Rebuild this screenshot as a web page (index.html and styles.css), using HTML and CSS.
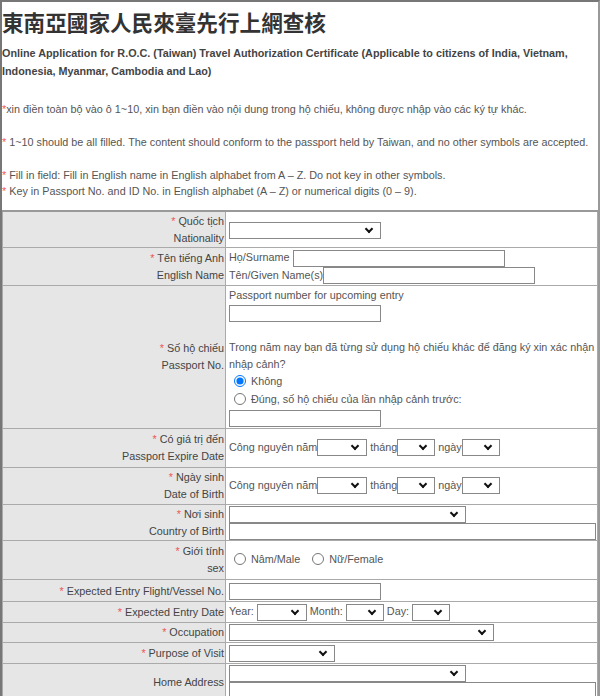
FILE: index.html
```html
<!DOCTYPE html>
<html lang="vi">
<head>
    <meta charset="UTF-8">
    <meta name="viewport" content="width=device-width, initial-scale=1.0">
    <title>東南亞國家人民來臺先行上網查核</title>
    <link rel="stylesheet" href="styles.css">
</head>
<body>
    <div class="page">
        <h1 class="title">東南亞國家人民來臺先行上網查核</h1>
        <p class="subtitle">Online Application for R.O.C. (Taiwan) Travel Authorization Certificate (Applicable to citizens of India, Vietnam, Indonesia, Myanmar, Cambodia and Lao)</p>

        <!-- Notes -->
        <div class="notes">
            <p class="note"><span class="req">*</span>xin điền toàn bộ vào ô 1~10, xin bạn điền vào nội dung trong hộ chiếu, không được nhập vào các ký tự khác.</p>
            <p class="note"><span class="req">*</span> 1~10 should be all filled. The content should conform to the passport held by Taiwan, and no other symbols are accepted.</p>
            <p class="note note-pair"><span class="req">*</span> Fill in field: Fill in English name in English alphabet from A – Z. Do not key in other symbols.<br>
            <span class="req">*</span> Key in Passport No. and ID No. in English alphabet (A – Z) or numerical digits (0 – 9).</p>
        </div>

        <!-- Application form -->
        <table class="form">
            <tr>
                <th><span class="req">*</span> Quốc tịch<br>Nationality</th>
                <td><span class="sel"><select class="sel-md"></select></span></td>
            </tr>
            <tr class="roomy">
                <th><span class="req">*</span> Tên tiếng Anh<br>English Name</th>
                <td class="stack">
                    <div>Họ/Surname <input type="text" class="in-name"></div>
                    <div>Tên/Given Name(s)<input type="text" class="in-name"></div>
                </td>
            </tr>
            <tr class="roomy">
                <th><span class="req">*</span> Số hộ chiếu<br>Passport No.</th>
                <td class="stack">
                    <div>Passport number for upcoming entry</div>
                    <div><input type="text" class="in-md"></div>
                    <div class="blank"></div>
                    <div>Trong năm nay bạn đã từng sử dụng hộ chiếu khác để đăng ký xin xác nhận nhập cảnh?</div>
                    <label class="radio"><input type="radio" name="prev" checked> Không</label>
                    <label class="radio"><input type="radio" name="prev"> Đúng, số hộ chiếu của lần nhập cảnh trước:</label>
                    <div><input type="text" class="in-md"></div>
                </td>
            </tr>
            <tr class="tall">
                <th><span class="req">*</span> Có giá trị đến<br>Passport Expire Date</th>
                <td>Công nguyên năm<span class="sel"><select class="sel-year"></select></span> tháng<span class="sel"><select class="sel-sm"></select></span> ngày<span class="sel"><select class="sel-sm"></select></span></td>
            </tr>
            <tr class="roomy">
                <th><span class="req">*</span> Ngày sinh<br>Date of Birth</th>
                <td>Công nguyên năm<span class="sel"><select class="sel-year"></select></span> tháng<span class="sel"><select class="sel-sm"></select></span> ngày<span class="sel"><select class="sel-sm"></select></span></td>
            </tr>
            <tr>
                <th><span class="req">*</span> Nơi sinh<br>Country of Birth</th>
                <td class="stack">
                    <span class="sel"><select class="sel-lg"></select></span>
                    <input type="text" class="in-full">
                </td>
            </tr>
            <tr class="tall">
                <th><span class="req">*</span> Giới tính<br>sex</th>
                <td>
                    <label class="radio inline"><input type="radio" name="sex"> Nâm/Male</label>
                    <label class="radio inline"><input type="radio" name="sex"> Nữ/Female</label>
                </td>
            </tr>
            <tr class="single flight">
                <th><span class="req">*</span> Expected Entry Flight/Vessel No.</th>
                <td><input type="text" class="in-md"></td>
            </tr>
            <tr class="single">
                <th><span class="req">*</span> Expected Entry Date</th>
                <td>Year: <span class="sel"><select class="sel-year"></select></span> Month: <span class="sel"><select class="sel-sm"></select></span> Day: <span class="sel"><select class="sel-sm"></select></span></td>
            </tr>
            <tr class="single">
                <th><span class="req">*</span> Occupation</th>
                <td><span class="sel"><select class="sel-xl"></select></span></td>
            </tr>
            <tr class="single">
                <th><span class="req">*</span> Purpose of Visit</th>
                <td><span class="sel"><select class="sel-purpose"></select></span></td>
            </tr>
            <tr>
                <th>Home Address</th>
                <td class="stack">
                    <span class="sel"><select class="sel-lg"></select></span>
                    <input type="text" class="in-full">
                </td>
            </tr>
        </table>
    </div>
</body>
</html>
```

FILE: styles.css
```css
/* Global Styles */
body {
    margin: 0;
    padding: 0;
    background: #fff;
    color: #555;
    font-family: "Liberation Sans", Arial, sans-serif;
    font-size: 10.8px;
}
.page {
    width: 600px;
    box-sizing: border-box;
    border-top: 2px solid #777;
    border-left: 2px solid #777;
    border-right: 2px solid #999;
    min-height: 696px;
}
.title {
    margin: 0;
    padding: 6px 0 0 0;
    font-family: "Noto Sans CJK TC", "Liberation Sans", sans-serif;
    font-size: 21.6px;
    line-height: 28px;
    font-weight: bold;
    color: #333;
}
.subtitle {
    margin: 8px 0 0 0;
    font-weight: bold;
    color: #444;
    line-height: 18px;
}

/* Notes */
.notes {
    margin-top: 21px;
}
.note {
    margin: 0 0 16px 0;
    line-height: 17px;
}
.note-pair {
    margin-bottom: 11px;
    line-height: 16px;
}
.req {
    color: #ee5555;
}

/* Form table */
.form {
    width: 100%;
    border-collapse: collapse;
    border-top: 2px solid #999;
}
.form th,
.form td {
    border: 1px solid #aaa;
    padding: 1px 1px 0;
    line-height: 17px;
    vertical-align: middle;
}
.form th {
    width: 223px;
    background: #e6e6e6;
    text-align: right;
    font-weight: normal;
    color: #444;
}
.form td {
    text-align: left;
    padding-left: 3px;
}
.roomy th,
.roomy td {
    padding-bottom: 1px;
}
.tall th,
.tall td {
    padding-top: 2px;
    padding-bottom: 2px;
}
.single th,
.single td {
    padding-top: 1px;
    padding-bottom: 1px;
    line-height: 17px;
}
.flight th,
.flight td {
    padding-top: 2px;
    padding-bottom: 1px;
    line-height: 18px;
}
.stack > div,
.stack > label {
    display: block;
    line-height: 17px;
}
.stack > .sel,
.stack > input {
    display: block;
    width: fit-content;
}
.stack > input.in-full {
    width: 367px;
}
.blank {
    height: 17px;
}
.radio {
    height: 18px;
}
.radio input {
    margin: 0 2px 0 5px;
    width: 12px;
    height: 12px;
    vertical-align: -2px;
}
.radio.inline {
    margin-right: 4px;
}

/* Fields */
input[type="text"],
select {
    box-sizing: border-box;
    height: 17px;
    margin: 0;
    padding: 0 2px;
    border: 1px solid #888;
    border-radius: 0;
    background: #fff;
    font-family: inherit;
    font-size: 11px;
    vertical-align: middle;
}
select {
    appearance: none;
    -webkit-appearance: none;
}

/* Select wrapper with its drop-down chevron */
.sel {
    position: relative;
    display: inline-block;
    vertical-align: middle;
    line-height: 0;
}
.sel::after {
    content: "";
    position: absolute;
    right: 9px;
    top: 4px;
    width: 4px;
    height: 4px;
    border-right: 2px solid #111;
    border-bottom: 2px solid #111;
    transform: rotate(45deg);
    pointer-events: none;
}
.in-name {
    width: 212px;
}
.in-md {
    width: 152px;
}
.in-full {
    width: 367px;
}
.sel-md {
    width: 152px;
}
.sel-lg {
    width: 237px;
}
.sel-xl {
    width: 265px;
}
.sel-purpose {
    width: 106px;
}
.sel-year {
    width: 50px;
}
.sel-sm {
    width: 38px;
}
```
